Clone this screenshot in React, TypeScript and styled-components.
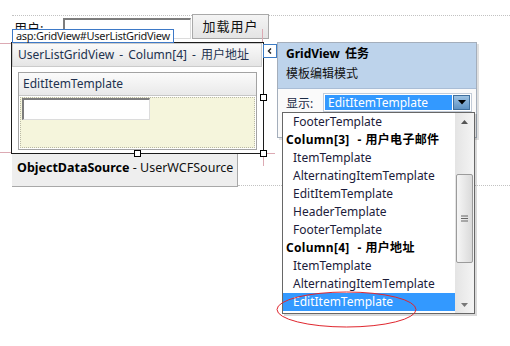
import styled, { createGlobalStyle } from 'styled-components';

const GlobalStyle = createGlobalStyle`
  * { box-sizing: border-box; }
  html, body { margin: 0; padding: 0; background: #fff; }
  body {
    font-family: "Noto Sans", "Noto Sans CJK SC", sans-serif;
    font-size: 12px;
    color: #111;
  }
`;

const Canvas = styled.div`
  position: relative;
  width: 510px;
  height: 346px;
  overflow: hidden;
  background: #fff;
`;

const TopRow = styled.div`
  display: flex;
  align-items: flex-start;
  margin: 15px 0 0 12px;
  height: 27px;
  border-top: 1px dotted #c2c2c2;
`;

const FieldLabel = styled.div`
  width: 51px;
  padding: 2px 0 0 2px;
  font-size: 13px;
`;

const TextInput = styled.div<{ $w: number; $h: number }>`
  width: ${p => p.$w}px;
  height: ${p => p.$h}px;
  background: #fff;
  border: 1px solid #dcdcdc;
  border-top: 2px solid #7d7d7d;
  border-left: 2px solid #7d7d7d;
`;

const TopInput = styled(TextInput)`
  margin-top: 2px;
`;

const LoadButton = styled.div`
  width: 77px;
  height: 25px;
  margin: -2px 0 0 1px;
  background: linear-gradient(#f4f4f4, #e4e4e4);
  border: 1px solid #a9a9a9;
  font-size: 13px;
  text-align: center;
  line-height: 23px;
  letter-spacing: 1px;
`;

const GridView = styled.div`
  margin-left: 11px;
  width: 253px;
  height: 112px;
  border: 1px solid #1c1c1c;
  background: #fff;
`;

const GridHeader = styled.div`
  height: 24px;
  margin-right: 1px;
  padding-left: 5px;
  line-height: 22px;
  color: #22324f;
  background: linear-gradient(#fafafa, #e5e5e5);
  border: 1px solid #cbcbcb;
  white-space: nowrap;
  word-spacing: 2px;
`;

const TemplateBox = styled.div`
  margin: 5px 0 0 6px;
  width: 239px;
  height: 78px;
  border: 1px solid #a3a3a3;
  display: flex;
  flex-direction: column;
`;

const TemplateHeader = styled.div`
  height: 23px;
  padding-left: 4px;
  line-height: 22px;
  color: #22324f;
  background: linear-gradient(#fbfbfb, #e9e9e9);
  border-bottom: 1px solid #c6c6c6;
`;

const TemplateBody = styled.div`
  flex: 1;
  margin: 1px;
  padding-left: 1px;
  background: #f5f5dc;
  border: 1px dotted #b9b9a6;
`;

const OdsRow = styled.div`
  display: flex;
  margin-left: 12px;
  height: 33px;
`;

const OdsBox = styled.div`
  width: 226px;
  padding: 5px 0 0 5px;
  background: #eeeeee;
  border-right: 1px solid #a8a8a8;
  border-bottom: 1px solid #a8a8a8;
  font-size: 12.5px;
  color: #111;
  white-space: nowrap;
  b { color: #000; }
`;

const OdsRest = styled.div`
  flex: 1;
  border-bottom: 1px dotted #c2c2c2;
  margin-bottom: 1px;
`;

const ControlTag = styled.div`
  position: absolute;
  left: 12px;
  top: 29px;
  height: 14px;
  padding: 0 3px;
  line-height: 12px;
  font-size: 11px;
  letter-spacing: -0.3px;
  color: #1a1a1a;
  background: #fff;
  border: 1px solid #3d79c7;
  white-space: nowrap;
`;

const Guide = styled.div<{ $x: number; $y: number; $w: number; $h: number }>`
  position: absolute;
  left: ${p => p.$x}px;
  top: ${p => p.$y}px;
  width: ${p => p.$w}px;
  height: ${p => p.$h}px;
  background: #dcaab3;
`;

const Handle = styled.div<{ $x: number; $y: number }>`
  position: absolute;
  left: ${p => p.$x}px;
  top: ${p => p.$y}px;
  width: 7px;
  height: 7px;
  background: #fff;
  border: 1px solid #000;
`;

const CollapseButton = styled.div`
  position: absolute;
  left: 263px;
  top: 44px;
  width: 14px;
  height: 14px;
  background: #fff;
  border: 1px solid #3c7bc4;
  display: flex;
  align-items: center;
  justify-content: center;
`;

const TaskPanel = styled.div`
  position: absolute;
  left: 277px;
  top: 42px;
  width: 200px;
  height: 96px;
  background: #fafafa;
  border: 1px solid #a4aebb;
  box-shadow: 2px 2px 0 rgba(0, 0, 0, 0.12);
`;

const PanelHeader = styled.div`
  height: 46px;
  padding: 1px 0 0 8px;
  background: #bdd3eb;
  border-bottom: 1px solid #a9bdd6;
  color: #111;
  line-height: 20px;
`;

const PanelTitle = styled.div`
  font-weight: bold;
  color: #000;
  word-spacing: 2px;
`;

const PanelRow = styled.div`
  display: flex;
  align-items: center;
  padding: 4px 0 0 8px;
`;

const RowLabel = styled.div`
  width: 37px;
  color: #1a2a44;
`;

const Combo = styled.div`
  display: flex;
  width: 149px;
  height: 19px;
  padding: 1px;
  background: #fff;
  border: 1px solid #c3ccd8;
`;

const ComboValue = styled.div`
  flex: 1;
  padding-left: 3px;
  line-height: 15px;
  color: #fff;
  background: #3399ff;
`;

const ComboButton = styled.div`
  width: 17px;
  margin-left: 1px;
  background: linear-gradient(#9cc2e3, #5f92c2);
  border: 1px solid #3f6f9d;
  display: flex;
  align-items: center;
  justify-content: center;
`;

const DropList = styled.div`
  position: absolute;
  left: 282px;
  top: 112px;
  width: 193px;
  height: 202px;
  display: flex;
  background: #fff;
  border: 1px solid #676767;
  box-shadow: 2px 2px 0 rgba(0, 0, 0, 0.15);
`;

const Items = styled.div`
  flex: 1;
`;

const Item = styled.div<{ $group?: boolean; $selected?: boolean }>`
  height: 18px;
  line-height: 18px;
  padding-left: ${p => (p.$group ? 3 : 10)}px;
  font-weight: ${p => (p.$group ? 'bold' : 'normal')};
  word-spacing: ${p => (p.$group ? 0.5 : 0)}px;
  letter-spacing: ${p => (p.$group ? 0.3 : 0)}px;
  color: ${p => (p.$selected ? '#fff' : p.$group ? '#000' : '#1c1c3a')};
  background: ${p => (p.$selected ? '#3399ff' : 'transparent')};
  white-space: pre;
`;

const ScrollBar = styled.div`
  width: 19px;
  display: flex;
  flex-direction: column;
  align-items: center;
  background: linear-gradient(to right, #e4e4e4, #f4f4f4);
`;

const ScrollArrow = styled.div`
  height: 17px;
  display: flex;
  align-items: center;
  justify-content: center;
`;

const ScrollTrack = styled.div`
  flex: 1;
`;

const Thumb = styled.div`
  width: 17px;
  height: 89px;
  margin-top: 44px;
  border: 1px solid #9b9b9b;
  border-radius: 2px;
  background: linear-gradient(to right, #f6f6f6, #dadada);
  display: flex;
  align-items: center;
  justify-content: center;
`;

const Callout = styled.svg`
  position: absolute;
  left: 275px;
  top: 290px;
`;

const listItems: { text: string; group?: boolean; selected?: boolean }[] = [
  { text: 'FooterTemplate' },
  { text: 'Column[3]  - 用户电子邮件', group: true },
  { text: 'ItemTemplate' },
  { text: 'AlternatingItemTemplate' },
  { text: 'EditItemTemplate' },
  { text: 'HeaderTemplate' },
  { text: 'FooterTemplate' },
  { text: 'Column[4]  - 用户地址', group: true },
  { text: 'ItemTemplate' },
  { text: 'AlternatingItemTemplate' },
  { text: 'EditItemTemplate', selected: true },
];

const App = () => {
  return (
    <Canvas>
      <GlobalStyle />

      <TopRow>
        <FieldLabel>用户:</FieldLabel>
        <TopInput $w={128} $h={21} />
        <LoadButton>加载用户</LoadButton>
      </TopRow>

      <GridView>
        <GridHeader>UserListGridView - Column[4] - 用户地址</GridHeader>
        <TemplateBox>
          <TemplateHeader>EditItemTemplate</TemplateHeader>
          <TemplateBody>
            <TextInput $w={128} $h={22} />
          </TemplateBody>
        </TemplateBox>
      </GridView>

      <OdsRow>
        <OdsBox>
          <b>ObjectDataSource</b> - UserWCFSource
        </OdsBox>
        <OdsRest />
      </OdsRow>

      <ControlTag>asp:GridView#UserListGridView</ControlTag>

      <Guide $x={0} $y={43} $w={11} $h={1} />
      <Guide $x={0} $y={152} $w={11} $h={1} />
      <Guide $x={262} $y={29} $w={1} $h={13} />
      <Guide $x={263} $y={153} $w={12} $h={1} />
      <Guide $x={263} $y={154} $w={1} $h={12} />

      <Handle $x={260} $y={94} />
      <Handle $x={134} $y={150} />
      <Handle $x={260} $y={150} />

      <CollapseButton>
        <svg width="8" height="8" viewBox="0 0 8 8">
          <path d="M5 1.5 L2.5 4 L5 6.5" fill="none" stroke="#222" strokeWidth="1.4" />
        </svg>
      </CollapseButton>

      <TaskPanel>
        <PanelHeader>
          <PanelTitle>GridView 任务</PanelTitle>
          <div>模板编辑模式</div>
        </PanelHeader>
        <PanelRow>
          <RowLabel>显示:</RowLabel>
          <Combo>
            <ComboValue>EditItemTemplate</ComboValue>
            <ComboButton>
              <svg width="8" height="5" viewBox="0 0 8 5">
                <path d="M0 0 H8 L4 4.5 Z" fill="#000" />
              </svg>
            </ComboButton>
          </Combo>
        </PanelRow>
      </TaskPanel>

      <DropList>
        <Items>
          {listItems.map((it, i) => (
            <Item key={i} $group={it.group} $selected={it.selected}>
              {it.text}
            </Item>
          ))}
        </Items>
        <ScrollBar>
          <ScrollArrow>
            <svg width="7" height="4" viewBox="0 0 7 4">
              <path d="M0 4 H7 L3.5 0 Z" fill="#555" />
            </svg>
          </ScrollArrow>
          <ScrollTrack>
            <Thumb>
              <svg width="7" height="7" viewBox="0 0 7 7">
                <path d="M0 1 H7 M0 3.5 H7 M0 6 H7" stroke="#666" strokeWidth="1" />
              </svg>
            </Thumb>
          </ScrollTrack>
          <ScrollArrow>
            <svg width="7" height="4" viewBox="0 0 7 4">
              <path d="M0 0 H7 L3.5 4 Z" fill="#777" />
            </svg>
          </ScrollArrow>
        </ScrollBar>
      </DropList>

      <Callout width="145" height="40" viewBox="0 0 145 40">
        <ellipse cx="71.5" cy="19.5" rx="69.5" ry="17.5" fill="none" stroke="#e0262e" strokeWidth="1" />
      </Callout>
    </Canvas>
  );
};

export default App;
